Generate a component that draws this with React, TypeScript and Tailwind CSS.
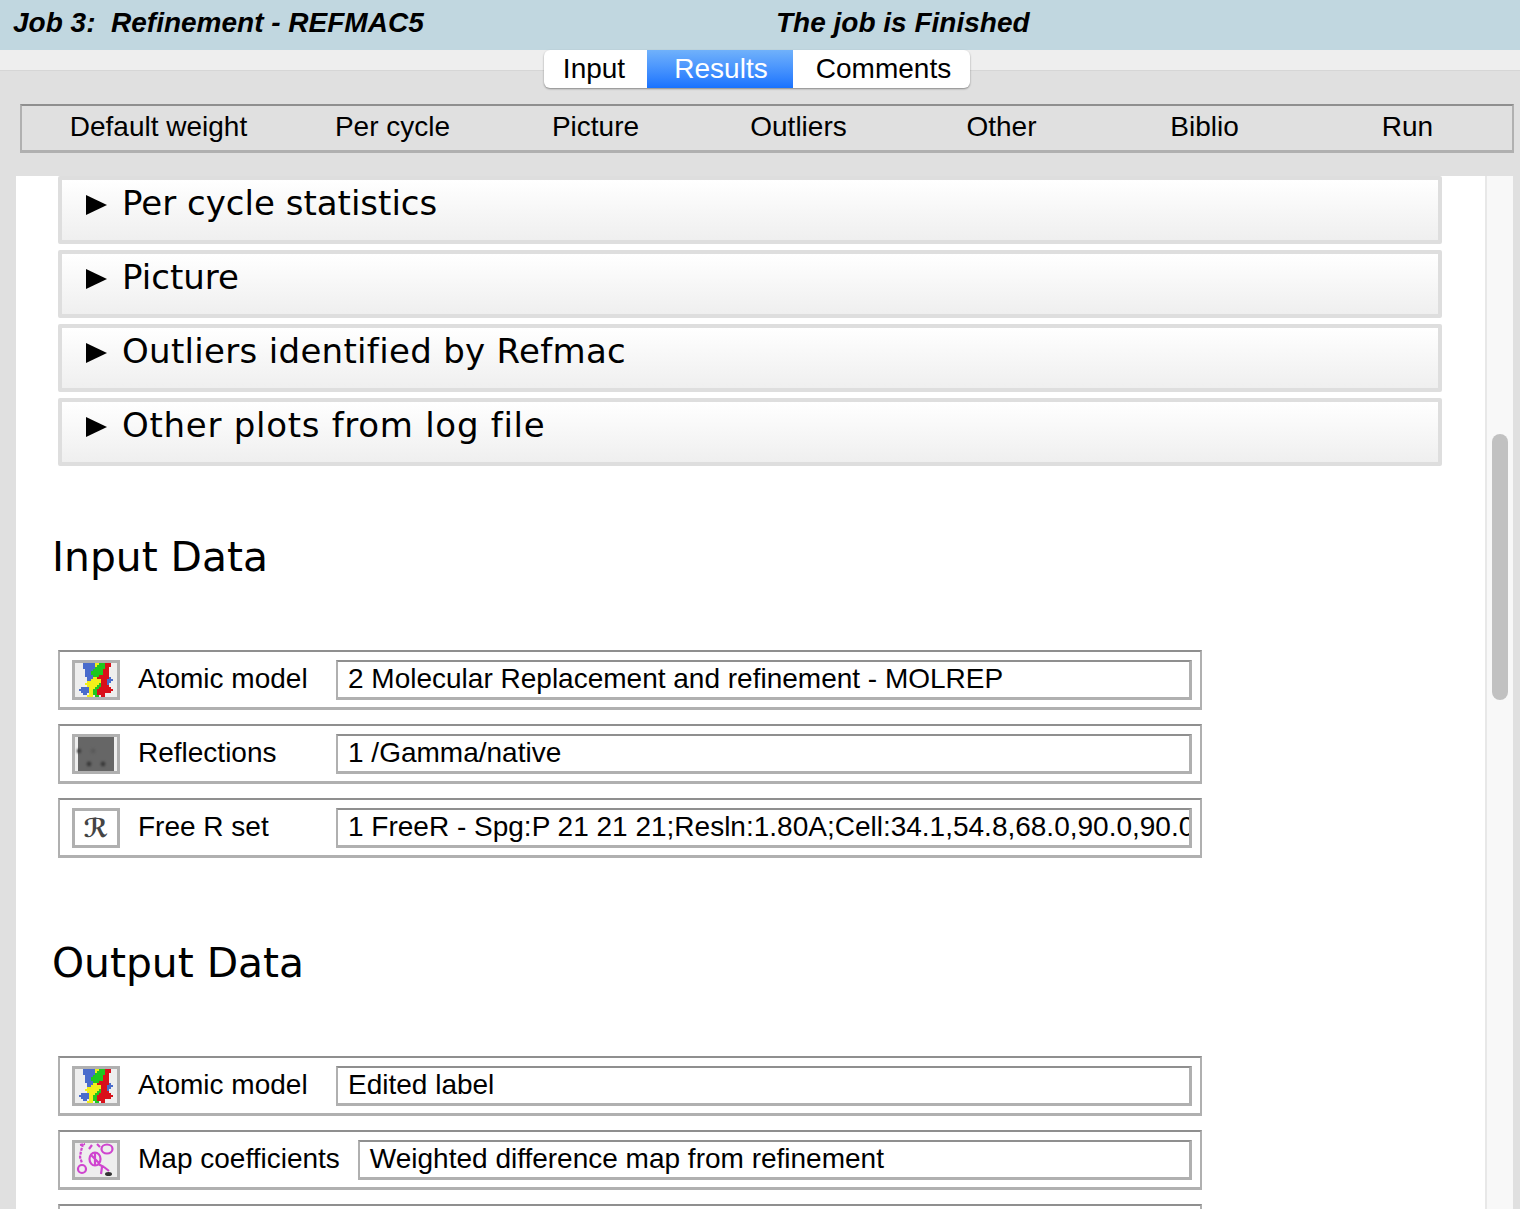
const atomicRows = [
  "....BBBBBBYYGGGRRR...",
  "....BBBBBBYGGGGRRR...",
  "....BBBBBBGGGGGRR....",
  ".....BBBBGGGGGRRR....",
  ".....BBBGGGGGGRRR....",
  ".....BBBGGGGGGRRR....",
  ".....BBBBGGGRRRRR....",
  "......BBBYYRRRRRRB...",
  "......BBYYYYYRRRBBB..",
  "......YYYYYYYRRRBB...",
  ".....YYYYYYYGRRRB....",
  "......YYYYYGGRRRR....",
  "...BBBBYYYGGRRRRRR...",
  "..BBBBBYYGGRRRRRRRR..",
  "...BBBBYYGGRRRRRRR...",
  "....BB.YYGGRRRR......",
  "......YYY.GG.RR......",
];

const atomicColors: Record<string, string> = {
  B: "#4a6ccc",
  G: "#1ec81e",
  Y: "#f2ee1a",
  R: "#d9101a",
};

function AtomicIcon() {
  return (
    <svg viewBox="0 0 42 34" className="w-[42px] h-[34px] blur-[0.4px]">
      {atomicRows.map((row, y) =>
        row.split("").map((c, x) =>
          c === "." ? null : (
            <rect key={`${x}-${y}`} x={x * 2} y={y * 2} width="2" height="2" fill={atomicColors[c]} />
          )
        )
      )}
    </svg>
  );
}

function ReflectionsIcon() {
  return (
    <svg viewBox="0 0 42 34" className="w-[42px] h-[34px]">
      <rect x="3" y="0" width="36" height="34" fill="#666666" />
      <g className="blur-[1px]">
        <circle cx="4" cy="14" r="2.2" fill="#3c3c3c" />
        <circle cx="18" cy="14" r="2.4" fill="#5a5a5a" />
        <circle cx="14" cy="27" r="2.4" fill="#3a3a3a" />
        <circle cx="28" cy="27" r="2.4" fill="#3a3a3a" />
      </g>
    </svg>
  );
}

function MapIcon() {
  return (
    <svg viewBox="0 0 42 34" className="w-[42px] h-[34px] blur-[0.4px]" fill="none" stroke="#cf45cf" strokeWidth="2.2">
      <ellipse cx="32" cy="6" rx="5.5" ry="4.5" />
      <path d="M5 2l5-1M8 1L6 8 5 14l2 6" strokeDasharray="3 1" />
      <circle cx="7" cy="26" r="4" />
      <path d="M14 6l3-4M22 1l3 3" />
      <ellipse cx="20" cy="16" rx="5.5" ry="6.5" />
      <path d="M16 12l8 8M20 10v12M23 21l6 3M29 24l5 4M27 24l-1 7" />
      <ellipse cx="33.5" cy="31" rx="3.5" ry="2" fill="#333333" stroke="none" />
    </svg>
  );
}

const RIcon = () => (
  <div className="w-full h-full bg-white flex items-center justify-center text-[26px] font-bold leading-none text-[#444] font-['DejaVu_Sans',serif]">
    ℛ
  </div>
);

function Collapsed({ title, tracking }: { title: string; tracking?: string }) {
  return (
    <div className="h-[68px] border-4 border-[#dedede] rounded-[2px] bg-gradient-to-b from-white to-[#efefef] flex items-start pt-[2px] pl-[24px] font-['DejaVu_Sans',sans-serif] text-[34px] leading-[42px] text-black">
      <svg viewBox="0 0 21 20" className="w-[21px] h-[20px] mt-[13px] mr-[15px]">
        <path d="M0 0L21 10L0 20Z" fill="#000" />
      </svg>
      <span className={tracking}>{title}</span>
    </div>
  );
}

function DataRow({ icon, label, value }: { icon: React.ReactNode; label: string; value: string }) {
  return (
    <div className="w-[1144px] h-[60px] mb-[14px] flex items-start pt-[8px] pl-[12px] pr-[8px] border-2 border-b-[3px] border-[#b0b0b0] border-t-[#8f8f8f] bg-white">
      <div className="w-[48px] h-[40px] shrink-0 border-[3px] border-[#b0b0b0] bg-[#eeeeee] flex items-center justify-center overflow-hidden">
        {icon}
      </div>
      <span className="ml-[18px] min-w-[198px] pr-[18px] leading-[38px] whitespace-nowrap">{label}</span>
      <div className="flex-1 min-w-0 h-[40px] border-2 border-b-[3px] border-r-[3px] border-[#b0b0b0] border-t-[#8f8f8f] pl-[10px] overflow-hidden whitespace-nowrap leading-[34px]">
        {value}
      </div>
    </div>
  );
}

const subTabs = ["Per cycle", "Picture", "Outliers", "Other", "Biblio", "Run"];

export default function App() {
  return (
    <div className="w-[1520px] h-[1209px] overflow-hidden flex flex-col bg-[#e0e0e0] text-black text-[28px] font-['Liberation_Sans',Arial,sans-serif]">
      {/* Title */}
      <div className="h-[50px] shrink-0 bg-[#c1d7e0] flex items-center font-bold italic pl-[13px] pb-[4px]">
        <span className="w-[763px] whitespace-pre">Job 3:  Refinement - REFMAC5</span>
        <span>The job is Finished</span>
      </div>

      {/* Tabs */}
      <div className="relative shrink-0 flex pl-[544px]">
        <div className="absolute left-0 right-0 top-0 h-[21px] bg-[#eeeeee] border-b border-[#d6d6d6]" />
        <div className="relative flex h-[38px] rounded-[6px] bg-white overflow-hidden shadow-[0_1px_2px_rgba(0,0,0,0.4)] leading-[38px]">
          <div className="w-[103px] pr-[3px] text-center">Input</div>
          <div className="w-[146px] pl-[2px] text-center text-white bg-gradient-to-b from-[#70b1fb] to-[#1872fe]">Results</div>
          <div className="w-[177px] pl-[4px] text-center">Comments</div>
        </div>
      </div>

      {/* Sub tabs */}
      <div className="shrink-0 ml-[20px] mt-[16px] w-[1494px] h-[49px] flex items-center pl-[4px] pr-[3px] pb-[3px] border-2 border-b-[3px] border-[#b0b0b0] border-t-[#8f8f8f]">
        <div className="flex-1 text-center">Default weight</div>
        {subTabs.map((t) => (
          <div key={t} className="w-[203px] text-center">{t}</div>
        ))}
      </div>

      {/* Body */}
      <div className="mt-[23px] ml-[16px] w-[1497px] flex-1 min-h-0 flex">
        <div className="flex-1 bg-white overflow-hidden pl-[42px] pr-[43px]">
          <div className="flex flex-col gap-[6px]">
            <Collapsed title="Per cycle statistics" />
            <Collapsed title="Picture" />
            <Collapsed title="Outliers identified by Refmac" tracking="tracking-[0.31px]" />
            <Collapsed title="Other plots from log file" tracking="tracking-[0.72px]" />
          </div>

          <h2 className="h-[184px] flex items-center -ml-[6px] font-['DejaVu_Sans',sans-serif] text-[40.8px]">Input Data</h2>
          <DataRow icon={<AtomicIcon />} label="Atomic model" value="2 Molecular Replacement and refinement - MOLREP" />
          <DataRow icon={<ReflectionsIcon />} label="Reflections" value="1 /Gamma/native" />
          <DataRow icon={<RIcon />} label="Free R set" value="1 FreeR - Spg:P 21 21 21;Resln:1.80A;Cell:34.1,54.8,68.0,90.0,90.0,90.0" />

          <h2 className="h-[184px] flex items-center -ml-[6px] font-['DejaVu_Sans',sans-serif] text-[40.8px]">Output Data</h2>
          <DataRow icon={<AtomicIcon />} label="Atomic model" value="Edited label" />
          <DataRow icon={<MapIcon />} label="Map coefficients" value="Weighted difference map from refinement" />
          <DataRow icon={null} label="" value="" />
        </div>

        {/* Scrollbar */}
        <div className="w-[28px] shrink-0 bg-[#f8f8f8] border-l-2 border-[#e8e8e8] pt-[258px] pl-[5px]">
          <div className="w-[16px] h-[266px] rounded-full bg-[#c1c1c1]" />
        </div>
      </div>
    </div>
  );
}
